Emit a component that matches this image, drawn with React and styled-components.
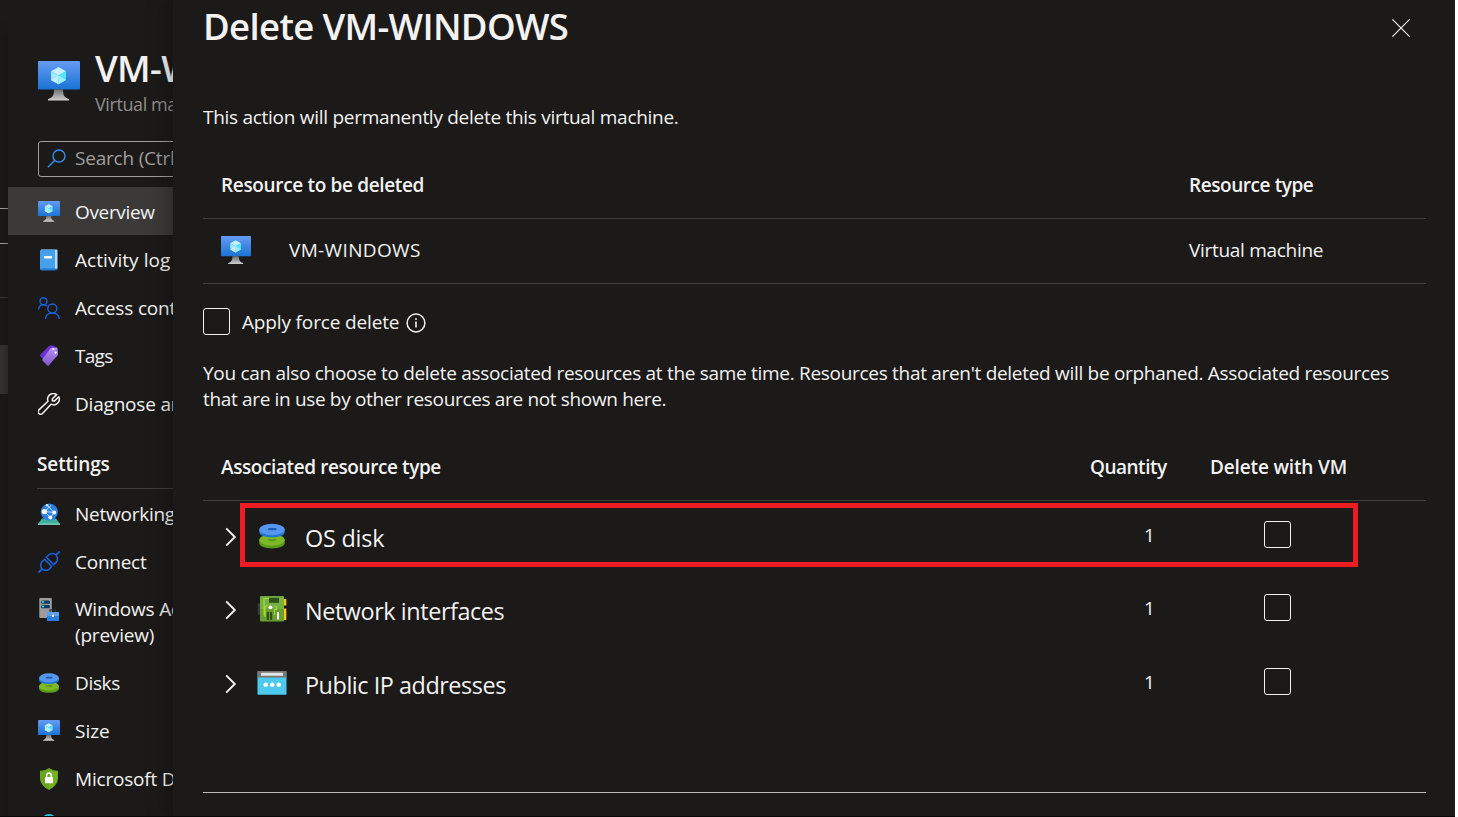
import { useState } from 'react'
import styled, { createGlobalStyle, ThemeProvider } from 'styled-components'

// ============================================================
// Delete VM blade, opened over the VM resource menu
// ============================================================

const theme = {
  colors: {
    bg: '#1b1a19',
    text: '#f3f2f1',
    muted: '#a19f9d',
    border: '#3f3e3d',
    borderStrong: '#bebbb8',
    selected: '#3b3a39',
    highlight: '#ed1c24',
    accent: '#2f8ef0',
  },
  fonts: { body: "'Open Sans', 'Noto Sans', sans-serif" },
}

const GlobalStyle = createGlobalStyle`
  *, *::before, *::after { box-sizing: border-box; }
  body {
    margin: 0;
    background: #fff;
    overflow: hidden;
  }
  h1, h2, p { margin: 0; font-weight: inherit; }
  svg { display: block; flex: none; }
`

// ── Layout ────────────────────────────────────────────────────

const Screen = styled.div`
  width: 1455px;
  height: 817px;
  display: flex;
  overflow: hidden;
  border-bottom: 1px solid #080808;
  background: ${({ theme }) => theme.colors.bg};
  color: ${({ theme }) => theme.colors.text};
  font-family: ${({ theme }) => theme.fonts.body};
  font-size: 19px;
  line-height: 26px;
  white-space: nowrap;
`

const Sliver = styled.div`
  width: 8px;
  flex: none;
  padding-top: 208px;
`

const SliverLine = styled.div`
  height: 1px;
  margin-bottom: ${({ $gap }) => $gap}px;
  background: ${({ $dim }) => ($dim ? '#3b3a39' : '#a5a3a1')};
`

const SliverBlock = styled.div`
  height: 49px;
  background: #343332;
`

const Menu = styled.nav`
  width: 165px;
  flex: none;
  overflow: hidden;
  background: ${({ theme }) => theme.colors.bg};
  box-shadow: 0 34px 12px rgba(0, 0, 0, 0.4);
`

const Panel = styled.main`
  flex: 1;
  display: flex;
  flex-direction: column;
  padding: 1px 29px 0 30px;
  background: ${({ theme }) => theme.colors.bg};
  box-shadow: 0 0 24px rgba(0, 0, 0, 0.4);
  z-index: 1;
`

const Text = styled.span`
  letter-spacing: ${({ $ls = 0 }) => $ls}px;
`

// ── Resource menu ─────────────────────────────────────────────

const MenuHeader = styled.header`
  display: flex;
  gap: 15px;
  padding: 43px 0 0 30px;
  height: 141px;
  svg { margin-top: 18px; }
`

const MenuTitle = styled.h2`
  font-size: 36.5px;
  line-height: 50px;
  font-weight: 600;
  letter-spacing: -0.65px;
`

const MenuSubtitle = styled.p`
  margin-top: -1px;
  font-size: 18px;
  line-height: 24px;
  color: #8f8d8b;
  letter-spacing: -0.4px;
`

const SearchBox = styled.div`
  height: 36px;
  width: 240px;
  margin: 0 0 10px 30px;
  display: flex;
  align-items: center;
  gap: 8px;
  padding: 0 0 2px 8px;
  border: 1px solid ${({ theme }) => theme.colors.muted};
  border-radius: 3px;
  color: ${({ theme }) => theme.colors.muted};
`

const MenuItem = styled.div`
  height: ${({ $tall }) => ($tall ? 73 : 48)}px;
  display: flex;
  align-items: ${({ $tall }) => ($tall ? 'flex-start' : 'center')};
  gap: 15px;
  padding: ${({ $tall }) => ($tall ? '11px 0 0 30px' : '1px 0 0 30px')};
  background: ${({ theme, $active }) => ($active ? theme.colors.selected : 'transparent')};
`

const MenuSection = styled.h2`
  height: 62px;
  margin-left: 29px;
  padding-top: 24px;
  font-size: 19px;
  font-weight: 600;
  letter-spacing: -0.1px;
  border-bottom: 1px solid ${({ theme }) => theme.colors.border};
`

// ── Delete panel ──────────────────────────────────────────────

const PanelHeader = styled.header`
  display: flex;
  justify-content: space-between;
  align-items: flex-start;
  margin-bottom: 53px;
`

const Title = styled.h1`
  font-size: 36.5px;
  line-height: 50px;
  font-weight: 600;
  letter-spacing: -0.65px;
`

const CloseButton = styled.button`
  display: flex;
  margin: 18px 16px 0 0;
  padding: 0;
  border: 0;
  background: none;
  color: inherit;
`

const Paragraph = styled.p`
  letter-spacing: ${({ $ls }) => $ls}px;
`

const TableHead = styled.div`
  display: grid;
  grid-template-columns: ${({ $cols }) => $cols};
  align-items: center;
  height: 67px;
  margin-top: 22px;
  padding-left: 18px;
  font-weight: 600;
  border-bottom: 1px solid ${({ theme }) => theme.colors.border};
`

const ResourceRow = styled.div`
  display: grid;
  grid-template-columns: 68px 1fr 237px;
  align-items: center;
  height: 65px;
  padding: 0 0 2px 18px;
  border-bottom: 1px solid ${({ theme }) => theme.colors.border};
`

const ForceRow = styled.label`
  display: flex;
  align-items: center;
  gap: 12px;
  margin: 24px 0 25px;
  svg { margin: 3px 0 0 -5px; }
`

const Checkbox = styled.input`
  appearance: none;
  width: 27px;
  height: 27px;
  margin: 0;
  border: 1px solid ${({ theme }) => theme.colors.text};
  border-radius: 3px;
  &:checked { background: ${({ theme }) => theme.colors.accent}; }
`

const AssociatedRow = styled.div`
  position: relative;
  display: grid;
  grid-template-columns: 32px 48px 1fr 174px 162px;
  align-items: start;
  height: 73.4px;
  padding: 20px 0 0 22px;
  ${({ theme, $highlight }) => $highlight && `
    &::after {
      content: '';
      position: absolute;
      left: 37px;
      top: 2px;
      width: 1118px;
      height: 64px;
      border: 5px solid ${theme.colors.highlight};
      pointer-events: none;
    }
  `}
`

const Expander = styled.span`
  padding-top: 6px;
`

const IconCell = styled.span`
  width: 30px;
  padding-top: 1px;
  svg { margin: 0 auto; }
`

const Name = styled.span`
  padding-top: 1px;
  font-size: 23.4px;
  line-height: 32px;
  letter-spacing: ${({ $ls }) => $ls}px;
`

const Quantity = styled.span`
  padding: 1px 0 0 54px;
`

const Footer = styled.footer`
  height: 24px;
  margin-top: auto;
  border-top: 1px solid ${({ theme }) => theme.colors.borderStrong};
`

// ── Icons ─────────────────────────────────────────────────────

const VmIcon = ({ width = 22 }) => (
  <svg width={width} height={(width * 40) / 42} viewBox="0 0 42 40">
    <defs>
      <linearGradient id="vmScreen" x1="0" y1="0" x2="0" y2="1">
        <stop offset="0" stopColor="#659bf2" />
        <stop offset="1" stopColor="#1b73d4" />
      </linearGradient>
      <linearGradient id="vmStand" x1="0" y1="0" x2="0" y2="1">
        <stop offset="0" stopColor="#707070" />
        <stop offset="1" stopColor="#d0d0d0" />
      </linearGradient>
    </defs>
    <rect width="42" height="28.5" rx="0.8" fill="url(#vmScreen)" />
    <path d="M16 28.5h9c0 6 1.500 8 6 9.500v1.500H10V38c4.500-1.500 6-3.500 6-9.500z" fill="url(#vmStand)" />
    <path d="M20.500 6l7.500 4.200-7.500 4.300-7.500-4.300z" fill="#c3f1ff" />
    <path d="M13 10.200l7.500 4.300v8.700L13 18.900z" fill="#9cebff" />
    <path d="M28 10.200l-7.500 4.300v8.700l7.500-4.300z" fill="#50e6ff" />
    <path d="M13 18.900l7.500-4.400v8.700z" fill="#c3f1ff" />
    <path d="M28 18.900l-7.500-4.400v8.700z" fill="#9cebff" />
  </svg>
)

const SearchIcon = () => (
  <svg width="20" height="20" viewBox="0 0 20 20" fill="none" stroke="#2f8ef0" strokeWidth="1.4">
    <circle cx="12" cy="8" r="6" />
    <path d="M7.800 12.300L.800 19.300" />
  </svg>
)

const LogIcon = () => (
  <svg width="22" height="22" viewBox="0 0 22 22">
    <path d="M3 .500h15.500a1 1 0 0 1 1 1v18a1 1 0 0 1-1 1H3z" fill="#b5dbfa" />
    <path d="M3.500.800H17v20.400H3.500A1.500 1.500 0 0 1 2 19.700V2.300A1.500 1.500 0 0 1 3.500.800z" fill="#45a0ee" />
    <path d="M2 19.500h17.300v.800a1 1 0 0 1-1 1H3.500A1.500 1.500 0 0 1 2 19.700z" fill="#2279cf" />
    <rect x="6" y="7" width="8" height="2.600" rx=".5" fill="#fff" />
  </svg>
)

const AccessIcon = () => (
  <svg width="22" height="22" viewBox="0 0 22 22" fill="none" stroke="#1a5fdc" strokeWidth="1.400">
    <circle cx="5.500" cy="4.200" r="3.500" />
    <path d="M.700 12.500c0-3 2-4.800 4.800-4.800 1.600 0 2.900.5 3.800 1.400" />
    <circle cx="14.300" cy="11.500" r="4.500" />
    <path d="M7.500 22c.3-3.700 3-6 6.800-6s6.600 2.300 7 6" />
  </svg>
)

const TagsIcon = () => (
  <svg width="22" height="22" viewBox="0 0 22 22">
    <defs>
      <linearGradient id="tagFront" x1="0" y1="0" x2="0" y2="1">
        <stop offset="0" stopColor="#b591ee" />
        <stop offset="1" stopColor="#7d55c8" />
      </linearGradient>
    </defs>
    <path d="M10.800 1.200a2 2 0 0 1 1.400-.600H16l1.500 2L5.500 14.500l-3.300-3.300a1 1 0 0 1 0-1.400z" fill="#6c2fd6" />
    <path d="M12.500 3.200a2 2 0 0 1 1.300-.500l4.300-.100a1.500 1.500 0 0 1 1.500 1.400l.400 5a2 2 0 0 1-.500 1.400l-9.500 10.800-6-6.300z" fill="url(#tagFront)" />
    <circle cx="15.300" cy="4" r="1.100" fill="#fff" />
    <circle cx="17.600" cy="7.700" r="1.100" fill="#fff" />
  </svg>
)

const WrenchIcon = () => (
  <svg width="22" height="22" viewBox="1.3 1 22 22" fill="none" stroke="#f3f2f1" strokeWidth="1.500" strokeLinejoin="round">
    <path d="M20 2.600l-4.300 4.200v2.100h2.200l4.200-4.200a5.700 5.700 0 0 1-7.700 7.500l-8.600 9.200a2.500 2.500 0 0 1-3.600-3.500l9.100-8.700A5.700 5.700 0 0 1 20 2.600z" />
  </svg>
)

const NetworkingIcon = () => (
  <svg width="22" height="22" viewBox="0 0 22 22">
    <path d="M4 15.500h14l4 5.500H0z" fill="#3fae9a" />
    <path d="M0 20.600h22v1.200H0z" fill="#8fe3d3" />
    <circle cx="11.300" cy="9" r="8.600" fill="#2b80e3" />
    <path d="M6.500 8.500L13 2.500M6.500 8.500l9.500 1M6.500 8.500l6 6M16 9.500l-3.500 5M9 2l7 7.500" stroke="#cfe6fb" strokeWidth=".9" fill="none" />
    <circle cx="6.300" cy="8.500" r="2.600" fill="#fff" />
    <circle cx="16.300" cy="9.500" r="1.900" fill="#fff" />
    <circle cx="12.300" cy="14.500" r="2" fill="#fff" />
    <circle cx="9" cy="2.200" r="1.300" fill="#cfe6fb" />
  </svg>
)

const ConnectIcon = () => (
  <svg width="22" height="22" viewBox="0 0 22 22" fill="none" stroke="#1a5fdc" strokeWidth="1.500">
    <g transform="translate(11 11) rotate(-45)">
      <path d="M-15 0h5M10 0h5" strokeWidth="1.800" />
      <path d="M-1.300-5.200v10.400h-3.200a5.200 5.200 0 0 1 0-10.400z" />
      <path d="M1.500-5.200v10.400h3.200a5.200 5.200 0 0 0 0-10.400z" />
    </g>
  </svg>
)

const ServerIcon = () => (
  <svg width="22" height="26" viewBox="0 0 22 26">
    <rect x="1.300" y="2" width="12.500" height="20" rx=".8" fill="#9d9d9d" />
    <rect x="3" y="4.500" width="9" height="3.200" rx="1.500" fill="#083c63" />
    <rect x="3" y="9" width="9" height="3.200" rx="1.500" fill="#083c63" />
    <circle cx="5" cy="6.100" r="1" fill="#50e6ff" />
    <circle cx="5" cy="10.600" r="1" fill="#50e6ff" />
    <path d="M12 16v-2.200h5.500V16" stroke="#333" strokeWidth="1.200" fill="none" />
    <rect x="9" y="16" width="12" height="9" rx=".7" fill="#2a7fe0" />
    <rect x="9" y="16" width="12" height="4" rx=".7" fill="#5ea0f0" />
    <rect x="14" y="18.800" width="2" height="2.200" fill="#fff" />
  </svg>
)

const DisksIcon = ({ width = 22 }) => (
  <svg width={width} height={width} viewBox="0 0 28 28">
    <path d="M1.300 17.500h25.400v3.800c0 2.900-5.700 5.200-12.700 5.200S1.300 24.200 1.300 21.300z" fill="#5a9a1c" />
    <ellipse cx="14" cy="18" rx="12.700" ry="5.500" fill="#7db927" />
    <path d="M10 17h8.500v1c-1 .900-2.600 1.200-4.200 1.200S11 18.900 10 18z" fill="#5a9a1c" />
    <path d="M1.300 7.500h25.400v2.800c0 3.200-5.700 5-12.700 5s-12.700-1.800-12.700-5z" fill="#1f75d8" />
    <ellipse cx="14" cy="7.500" rx="12.700" ry="5.800" fill="#5597ee" />
    <rect x="10" y="6" width="8.500" height="2.200" rx="1" fill="#1a5fb4" />
  </svg>
)

const ShieldIcon = () => (
  <svg width="22" height="22" viewBox="0 0 22 22">
    <path d="M11 0c2.500 1.700 5 2.600 9 2.700V10c0 6-4.500 9.500-9 12-4.500-2.500-9-6-9-12V2.700C6 2.600 8.500 1.700 11 0z" fill="#6aa51f" />
    <path d="M11 1.300c2.400 1.500 4.600 2.200 7.900 2.400V10c0 5.200-3.800 8.300-7.900 10.700z" fill="#76b31f" />
    <path d="M8.700 9.500V7.300a2.300 2.300 0 0 1 4.600 0v2.200" stroke="#fff" strokeWidth="1.500" fill="none" />
    <rect x="7" y="9" width="8" height="6.300" rx=".6" fill="#fff" />
  </svg>
)

const NextIcon = () => (
  <svg width="22" height="26" viewBox="0 0 22 26">
    <ellipse cx="11" cy="13" rx="10" ry="13" fill="#32bedd" />
  </svg>
)

const NicIcon = () => (
  <svg width="30" height="28" viewBox="0 0 30 28">
    <rect x=".800" y="8.500" width="3" height="11" fill="#3b3b3b" />
    <rect x="26" y="4" width="3.300" height="6.500" fill="#ffca00" />
    <rect x="26" y="13.500" width="3.300" height="11.500" fill="#ffca00" />
    <rect x="3" y="1.300" width="24" height="25.200" rx="1" fill="#699e33" />
    <path d="M3 2.300a1 1 0 0 1 1-1h22a1 1 0 0 1 1 1V14H3z" fill="#76b043" />
    <path d="M12 3.500H7v17M8 22V11M18 11.500h1.500v3H17.500V20M10.500 11H8" stroke="#a4dc2c" strokeWidth="1.100" fill="none" />
    <rect x="12" y="2.800" width="10" height="5" fill="#32511a" />
    <rect x="9.800" y="17" width="2.200" height="8" fill="#32511a" />
    <rect x="13" y="17" width="2.200" height="8" fill="#32511a" />
    <path d="M21 24.500V17" stroke="#f3f2f1" strokeWidth="2" />
    <circle cx="13.500" cy="12.300" r="1.900" fill="#fff" />
  </svg>
)

const IpIcon = () => (
  <svg width="30" height="28" viewBox="0 0 30 28">
    <rect x=".500" y="2" width="29" height="23.800" rx="1" fill="#4cc9ec" />
    <path d="M.500 3a1 1 0 0 1 1-1h27a1 1 0 0 1 1 1v5.500H.500z" fill="#767676" />
    <rect x="4" y="3.700" width="22" height="3" rx=".3" fill="#e6e6e6" />
    <circle cx="8.700" cy="15.700" r="2.300" fill="#fff" />
    <circle cx="15.200" cy="15.700" r="2.300" fill="#fff" />
    <circle cx="21.700" cy="15.700" r="2.300" fill="#fff" />
  </svg>
)

const InfoIcon = () => (
  <svg width="20" height="20" viewBox="0 0 20 20" fill="none" stroke="currentColor" strokeWidth="1.500">
    <circle cx="10" cy="10" r="8.900" />
    <path d="M10 8.500v6M10 5.300v1.700" strokeWidth="1.600" />
  </svg>
)

const ChevronIcon = () => (
  <svg width="12" height="20" viewBox="0 0 12 20" fill="none" stroke="currentColor" strokeWidth="1.900">
    <path d="M1.200 1.400L9.800 10l-8.600 8.600" />
  </svg>
)

const CloseIcon = () => (
  <svg width="18" height="18" viewBox="0 0 18 18" stroke="currentColor" strokeWidth="1.200">
    <path d="M.400.400l17.200 17.200M17.600.400L.400 17.600" />
  </svg>
)

// ── Data ──────────────────────────────────────────────────────

const mainItems = [
  { label: 'Overview', icon: <VmIcon />, ls: -0.35, active: true },
  { label: 'Activity log', icon: <LogIcon />, ls: 0.05 },
  { label: 'Access control (IAM)', icon: <AccessIcon />, ls: -0.15 },
  { label: 'Tags', icon: <TagsIcon />, ls: -0.7 },
  { label: 'Diagnose and solve problems', icon: <WrenchIcon />, ls: -0.2 },
]

const settingsItems = [
  { label: 'Networking', icon: <NetworkingIcon />, ls: -0.25 },
  { label: 'Connect', icon: <ConnectIcon />, ls: -0.25 },
  { label: <>Windows Admin Center<br />(preview)</>, icon: <ServerIcon />, ls: -0.2, tall: true },
  { label: 'Disks', icon: <DisksIcon />, ls: -0.35 },
  { label: 'Size', icon: <VmIcon />, ls: 0 },
  { label: 'Microsoft Defender for Cloud', icon: <ShieldIcon />, ls: -0.2 },
  { label: '', icon: <NextIcon /> },
]

const associated = [
  { name: 'OS disk', icon: <DisksIcon width={28} />, ls: -0.2, highlight: true },
  { name: 'Network interfaces', icon: <NicIcon />, ls: -0.42 },
  { name: 'Public IP addresses', icon: <IpIcon />, ls: -0.45 },
]

// ── Components ────────────────────────────────────────────────

const MenuList = ({ items }) => items.map((item, i) => (
  <MenuItem key={i} $active={item.active} $tall={item.tall}>
    {item.icon}
    <Text $ls={item.ls}>{item.label}</Text>
  </MenuItem>
))

const ResourceMenu = () => (
  <Menu>
    <MenuHeader>
      <VmIcon width={42} />
      <div>
        <MenuTitle>VM-WINDOWS</MenuTitle>
        <MenuSubtitle>Virtual machine</MenuSubtitle>
      </div>
    </MenuHeader>
    <SearchBox>
      <SearchIcon />
      <Text $ls={-0.2}>Search (Ctrl+/)</Text>
    </SearchBox>
    <MenuList items={mainItems} />
    <MenuSection>Settings</MenuSection>
    <MenuList items={settingsItems} />
  </Menu>
)

const App = () => {
  const [force, setForce] = useState(false)
  const [selected, setSelected] = useState({})

  const toggle = name => setSelected(prev => ({ ...prev, [name]: !prev[name] }))

  return (
    <ThemeProvider theme={theme}>
      <GlobalStyle />
      <Screen>
        <Sliver>
          <SliverLine $gap={34} />
          <SliverLine $gap={53} />
          <SliverLine $gap={47} $dim />
          <SliverBlock />
        </Sliver>

        <ResourceMenu />

        <Panel>
          <PanelHeader>
            <Title>Delete VM-WINDOWS</Title>
            <CloseButton aria-label="Close"><CloseIcon /></CloseButton>
          </PanelHeader>

          <Paragraph $ls={-0.28}>This action will permanently delete this virtual machine.</Paragraph>

          <TableHead $cols="1fr 237px">
            <Text $ls={-0.34}>Resource to be deleted</Text>
            <Text $ls={-0.43}>Resource type</Text>
          </TableHead>
          <ResourceRow>
            <VmIcon width={30} />
            <Text $ls={0.35}>VM-WINDOWS</Text>
            <Text $ls={-0.3}>Virtual machine</Text>
          </ResourceRow>

          <ForceRow>
            <Checkbox type="checkbox" checked={force} onChange={() => setForce(!force)} />
            <Text $ls={-0.15}>Apply force delete</Text>
            <InfoIcon />
          </ForceRow>

          <Paragraph $ls={-0.3}>
            You can also choose to delete associated resources at the same time. Resources that aren't deleted will be orphaned. Associated resources<br />
            <Text $ls={-0.34}>that are in use by other resources are not shown here.</Text>
          </Paragraph>

          <TableHead $cols="1fr 120px 216px">
            <Text $ls={-0.41}>Associated resource type</Text>
            <Text $ls={-0.5}>Quantity</Text>
            <Text $ls={-0.15}>Delete with VM</Text>
          </TableHead>
          {associated.map(({ name, icon, ls, highlight }) => (
            <AssociatedRow key={name} $highlight={highlight}>
              <Expander><ChevronIcon /></Expander>
              <IconCell>{icon}</IconCell>
              <Name $ls={ls}>{name}</Name>
              <Quantity>1</Quantity>
              <Checkbox type="checkbox" checked={!!selected[name]} onChange={() => toggle(name)} />
            </AssociatedRow>
          ))}

          <Footer />
        </Panel>
      </Screen>
    </ThemeProvider>
  )
}

export default App
